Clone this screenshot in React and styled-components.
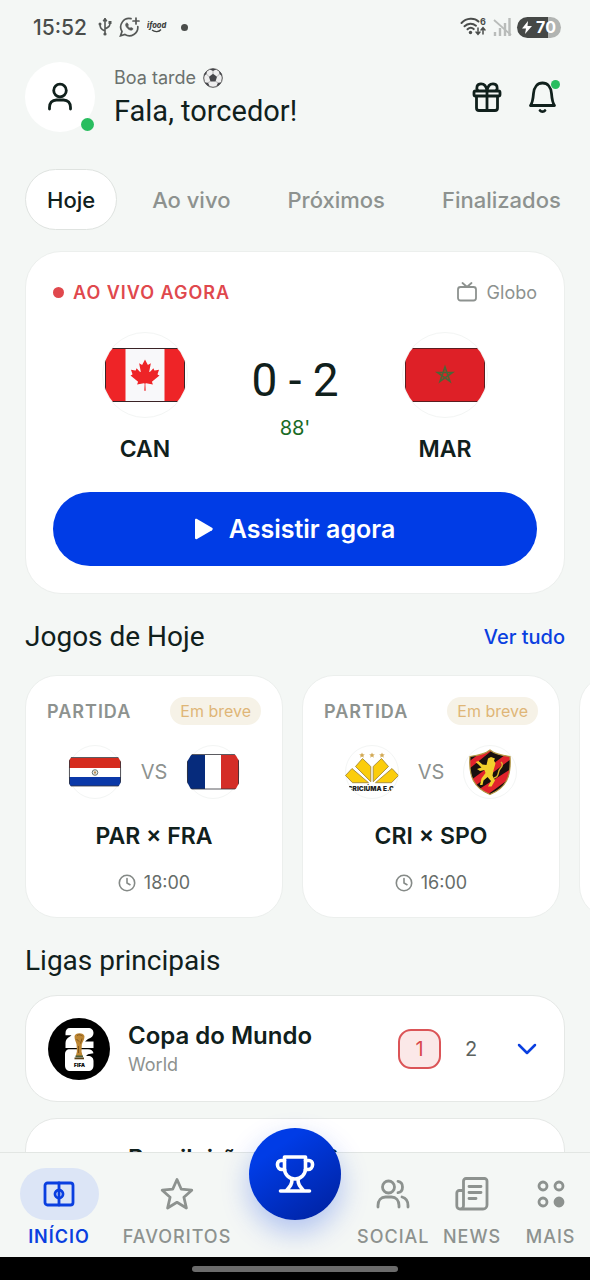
import React, { useState } from 'react';
import styled, { createGlobalStyle } from 'styled-components';

const matches = [
  { id: 1, home: 'PAR', away: 'FRA', time: '18:00', homeIcon: <ParaguayFlag />, awayIcon: <FranceFlag /> },
  { id: 2, home: 'CRI', away: 'SPO', time: '16:00', homeIcon: <CriciumaCrest />, awayIcon: <SportCrest /> },
];

const leagues = [
  { id: 1, name: 'Copa do Mundo', country: 'World', live: 1, total: 2, logo: <WorldCupLogo /> },
  { id: 2, name: 'Brasileirão Série B', country: 'Brazil', live: 0, total: 1, logo: null },
];

const tabs = ['Hoje', 'Ao vivo', 'Próximos', 'Finalizados'];

function App() {
  const [tab, setTab] = useState('Hoje');
  const [page, setPage] = useState('INÍCIO');

  return (
    <>
      <GlobalStyle />
      <Screen>
        <StatusBar />
        <Content>
          <Header />
          <Tabs role="tablist">
            {tabs.map((name) => (
              <Tab key={name} role="tab" aria-selected={tab === name} $active={tab === name} onClick={() => setTab(name)}>
                {name}
              </Tab>
            ))}
          </Tabs>
          <LiveMatch />
          <SectionHead $bottom={20}>
            <SectionTitle>Jogos de Hoje</SectionTitle>
            <SeeAll href="#jogos">Ver tudo</SeeAll>
          </SectionHead>
          <Carousel>
            {matches.map((match) => (
              <MatchCard key={match.id} match={match} />
            ))}
            {/* next match, still loading */}
            <Card />
          </Carousel>
          <SectionHead $bottom={16}>
            <SectionTitle>Ligas principais</SectionTitle>
          </SectionHead>
          <LeagueList>
            {leagues.map((league) => (
              <LeagueRow key={league.id} league={league} />
            ))}
          </LeagueList>
        </Content>
        <NavBar page={page} setPage={setPage} />
        <GestureBar><GestureHandle /></GestureBar>
      </Screen>
    </>
  );
}

function StatusBar() {
  return (
    <Status>
      <StatusGroup $gap={7}>
        <Clock>15:52</Clock>
        <svg width="14" height="20" viewBox="0 0 14 20" fill="none" stroke="#555856" strokeWidth="1.6">
          <path d="M7 2v14M7 14C3 12 2 11 2 7M7 12c4-2 5-3 5-6" />
          <path d="M5 4l2-3 2 3z" fill="#555856" strokeWidth="1" />
          <circle cx="7" cy="17" r="1.6" fill="#555856" stroke="none" />
          <circle cx="2" cy="7" r="1.5" fill="#555856" stroke="none" />
          <path d="M10.500 4h3v3h-3z" fill="#555856" stroke="none" />
        </svg>
        <svg width="21" height="20" viewBox="0 0 21 20" fill="none" stroke="#555856" strokeWidth="1.7" strokeLinecap="round">
          <path d="M12 1.700A8.500 8.500 0 0 0 3 14.500L1.500 18.800l4.400-1.300A8.500 8.500 0 0 0 18.800 9.500" />
          <path d="M17 1v6M14 4h6" />
          <path d="M7 6.500c-.8 1-.6 2.600 1.500 4.800s4.200 2.400 5.200 1.300l.3-1-2-1.200-1 .9c-1-.5-1.800-1.300-2.300-2.300l.8-1-1.200-1.900z" fill="#555856" strokeWidth="0.6" />
        </svg>
        <svg width="21" height="14" viewBox="0 0 21 14">
          <text x="0" y="8" fontFamily="Inter, sans-serif" fontSize="7.500" fontStyle="italic" fontWeight="800" fill="#3f4240">ifood</text>
          <path d="M5 10c3 2.500 7 2 9-.5" fill="none" stroke="#3f4240" strokeWidth="1.300" />
        </svg>
        <StatusDot />
      </StatusGroup>
      <StatusGroup $gap={5}>
        <svg width="27" height="20" viewBox="0 0 27 20" fill="none" stroke="#4a4d4b" strokeWidth="2" strokeLinecap="round">
          <path d="M1.500 6C6.500.7 14.500.7 18.500 4.500M4.500 9.300c3.300-3.300 8-3.500 11.500-.6M7.500 12.300c2-1.800 4.500-1.800 6.200-.2" />
          <circle cx="10.500" cy="15.500" r="1.700" fill="#4a4d4b" stroke="none" />
          <path d="M18 11v6M16 15l2 2.300 2-2.300M23 17v-6M21 13l2-2.300 2 2.300" strokeWidth="1.500" />
          <text x="20" y="8" fontFamily="Inter, sans-serif" fontSize="9" fontWeight="700" fill="#4a4d4b" stroke="none">6</text>
        </svg>
        <svg width="20" height="20" viewBox="0 0 20 20" stroke="#b9bcba" strokeWidth="2.400">
          <path d="M3 19v-4M8 19v-8M13 19V6M17.500 19V1" />
          <path d="M2 3l17 15" strokeWidth="1.800" />
        </svg>
        <Battery>
          <svg width="10" height="13" viewBox="0 0 10 13" fill="#fff"><path d="M6 0L0 7.500h4L3 13l7-8H5.500z" /></svg>
          70
        </Battery>
      </StatusGroup>
    </Status>
  );
}

function Header() {
  return (
    <TopBar>
      <Avatar aria-label="Perfil">
        <svg width="28" height="30" viewBox="0 0 28 30" fill="none" stroke="#10201c" strokeWidth="2.800" strokeLinecap="round">
          <circle cx="14" cy="8.500" r="6.300" />
          <path d="M3.500 27v-1.500c0-4.500 2.500-7.500 7-7.500h7c4.500 0 7 3 7 7.500V27" />
        </svg>
        <OnlineDot />
      </Avatar>
      <Greeting>
        <Hello>
          Boa tarde
          <BallIcon />
        </Hello>
        <UserName>Fala, torcedor!</UserName>
      </Greeting>
      <Actions>
        <IconButton aria-label="Presentes">
          <svg width="30" height="32" viewBox="0 0 30 32" fill="none" stroke="#10201c" strokeWidth="2.800" strokeLinejoin="round">
            <rect x="2" y="10" width="26" height="5" rx="1.500" />
            <path d="M4.500 15v12a2.500 2.500 0 0 0 2.500 2.500h16a2.500 2.500 0 0 0 2.500-2.500V15M15 10v19.500" />
            <path d="M15 10C14.500 6 12.500 2.800 9 2.800c-4 0-5.500 4-3 7.200M15 10c.5-4 2.500-7.200 6-7.200 4 0 5.500 4 3 7.200" />
          </svg>
        </IconButton>
        <IconButton aria-label="Notificações">
          <svg width="30" height="34" viewBox="0 0 30 34" fill="none" stroke="#10201c" strokeWidth="2.800" strokeLinecap="round" strokeLinejoin="round">
            <path d="M2.500 25.500h24c-1.800-2.500-2.500-5.500-3-12C23 7 19.500 3 14.500 3S6 7 5.500 13.500c-.5 6.500-1.200 9.500-3 12z" />
            <path d="M12 30.500c1.200 1.600 3.800 1.600 5 0" />
          </svg>
          <NewsDot />
        </IconButton>
      </Actions>
    </TopBar>
  );
}

function LiveMatch() {
  return (
    <LiveCard>
      <LiveHead>
        <LiveLabel><LiveDot />AO VIVO AGORA</LiveLabel>
        <Channel>
          <svg width="20" height="20" viewBox="0 0 20 20" fill="none" stroke="#8d928f" strokeWidth="1.800" strokeLinecap="round" strokeLinejoin="round">
            <rect x="1" y="5" width="18" height="13.500" rx="2.500" />
            <path d="M5.500 1L10 5l4.500-4" />
          </svg>
          Globo
        </Channel>
      </LiveHead>
      <Scoreboard>
        <Team>
          <Badge $size={86}><CanadaFlag /></Badge>
          <TeamName>CAN</TeamName>
        </Team>
        <ScoreBox>
          <Score>0 - 2</Score>
          <Minute>88'</Minute>
        </ScoreBox>
        <Team>
          <Badge $size={86}><MoroccoFlag /></Badge>
          <TeamName>MAR</TeamName>
        </Team>
      </Scoreboard>
      <WatchButton>
        <svg width="18" height="22" viewBox="0 0 18 22" fill="#fff"><path d="M0 2.200C0 .8 1 .5 2 1l15 8.800c1 .6 1 1.800 0 2.400L2 21c-1 .5-2 .2-2-1.200z" /></svg>
        Assistir agora
      </WatchButton>
    </LiveCard>
  );
}

function MatchCard({ match }) {
  return (
    <Card>
      <CardHead>
        <CardLabel>PARTIDA</CardLabel>
        <Soon>Em breve</Soon>
      </CardHead>
      <Versus>
        <Badge $size={54}>{match.homeIcon}</Badge>
        VS
        <Badge $size={54}>{match.awayIcon}</Badge>
      </Versus>
      <CardTitle>{match.home} × {match.away}</CardTitle>
      <CardTime>
        <svg width="18" height="18" viewBox="0 0 18 18" fill="none" stroke="#858a87" strokeWidth="1.600" strokeLinecap="round">
          <circle cx="9" cy="9" r="7.700" />
          <path d="M9 4.500V9l3 1.700" />
        </svg>
        {match.time}
      </CardTime>
    </Card>
  );
}

function LeagueRow({ league }) {
  return (
    <League>
      <LeagueLogo>{league.logo}</LeagueLogo>
      <LeagueText>
        <LeagueName>{league.name}</LeagueName>
        <LeagueCountry>{league.country}</LeagueCountry>
      </LeagueText>
      {league.live > 0 && <LiveCount>{league.live}</LiveCount>}
      <TotalCount>{league.total}</TotalCount>
      <Expand aria-label={`Abrir ${league.name}`}>
        <svg width="20" height="12" viewBox="0 0 20 12" fill="none" stroke="#0a3fe0" strokeWidth="2.500" strokeLinecap="round" strokeLinejoin="round">
          <path d="M2 2l8 8 8-8" />
        </svg>
      </Expand>
    </League>
  );
}

function NavBar({ page, setPage }) {
  const item = (name, icon) => (
    <NavItem $active={page === name} onClick={() => setPage(name)}>
      <NavIcon $active={page === name}>{icon}</NavIcon>
      {name}
    </NavItem>
  );

  return (
    <Nav>
      {item('INÍCIO', (
        <Stroke width="32" height="26" viewBox="0 0 32 26">
          <rect x="2" y="2" width="28" height="22" rx="2.500" />
          <path d="M16 2v22" />
          <circle cx="16" cy="13" r="4" />
        </Stroke>
      ))}
      {item('FAVORITOS', (
        <Stroke width="34" height="34" viewBox="0 0 34 34">
          <path d="M17 2.500l4.300 9.700 10.500 1-7.900 7.100 2.500 10.700L17 25.300 7.600 31l2.500-10.700-7.900-7.100 10.500-1z" />
        </Stroke>
      ))}
      <TrophyButton aria-label="Campeonatos">
        <svg width="42" height="42" viewBox="0 0 42 42" fill="none" stroke="#fff" strokeWidth="3.600" strokeLinecap="round" strokeLinejoin="round">
          <path d="M10.500 4h21v11.500c0 6-4.500 10.500-10.500 10.500s-10.500-4.500-10.500-10.500z" />
          <path d="M10.500 7.500H7a3.500 3.500 0 0 0-3.500 3.500v1A4.500 4.500 0 0 0 8 16.500h2.500M31.500 7.500H35a3.500 3.500 0 0 1 3.500 3.500v1a4.500 4.500 0 0 1-4.500 4.500h-2.500" />
          <path d="M18 26.500c0 5-2 7-5.500 11M24 26.500c0 5 2 7 5.500 11M6.500 38h29" />
        </svg>
      </TrophyButton>
      {item('SOCIAL', (
        <Stroke width="34" height="30" viewBox="0 0 34 30">
          <circle cx="12.500" cy="8" r="6" />
          <path d="M2 28v-1.500C2 21.500 5 18 9.500 18h6c4.500 0 7.500 3.500 7.500 8.500V28" />
          <path d="M22 2.300c6 .8 6 10.600 0 11.400M26 18c3.800 1 6 4.200 6 8.500V28" />
        </Stroke>
      ))}
      {item('NEWS', (
        <Stroke width="34" height="34" viewBox="0 0 34 34">
          <path d="M5 32h23a4 4 0 0 0 4-4V4a2.500 2.500 0 0 0-2.500-2.500H11A2.500 2.500 0 0 0 8.500 4v24.500A3.200 3.200 0 0 1 5 32a3.200 3.200 0 0 1-3.200-3.500V16a2.500 2.500 0 0 1 2.500-2.500h4" />
          <path d="M14 9.500h12M14 15.500h12M14 21.500h7" />
        </Stroke>
      ))}
      {item('MAIS', (
        <Stroke width="28" height="28" viewBox="0 0 28 28">
          <circle cx="6" cy="6" r="4" />
          <circle cx="22" cy="6" r="4" />
          <circle cx="6" cy="22" r="4" />
          <circle cx="22" cy="22" r="4" fill="currentColor" />
        </Stroke>
      ))}
    </Nav>
  );
}

function BallIcon() {
  return (
    <svg width="20" height="20" viewBox="0 0 20 20">
      <circle cx="10" cy="10" r="9.300" fill="#eeeeee" stroke="#555" strokeWidth="1" />
      <g fill="#45464a">
        <path d="M10 5.800l4 2.900-1.500 4.700h-5L6 8.700z" />
        <path d="M6.500 1.300L10 3l3.500-1.700C11.500.5 8.500.5 6.500 1.300zM1 8l2.500-2 .4-3C2 4.500 1 6 1 8zM19 8l-2.500-2-.4-3C18 4.500 19 6 19 8zM2 14.500l3 .2 1.800 3.800C4.500 17.800 3 16.500 2 14.500zM18 14.500l-3 .2-1.800 3.800c2.300-.7 3.800-2 4.800-4z" />
      </g>
      <path d="M10 3v3M3.500 6L6 8.700M16.500 6L14 8.700M5 14.700l2.500-1.300M15 14.700l-2.500-1.300" stroke="#999" strokeWidth=".7" />
    </svg>
  );
}

function CanadaFlag() {
  return (
    <Crest $radius={42} width="84" height="84" viewBox="0 0 84 84">
      <rect x="2" y="15" width="80" height="54" fill="#ee2427" />
      <rect x="22.500" y="15" width="39" height="54" fill="#f8f8fa" />
      <path
        transform="translate(42 42) scale(.0078)"
        fill="#ee2427"
        d="m-90 2030 45-863a95 95 0 0 0-111-98l-859 151 116-320a65 65 0 0 0-20-73l-941-762 212-99a65 65 0 0 0 34-79l-186-572 542 115a65 65 0 0 0 73-38l105-247 423 454a65 65 0 0 0 111-57l-204-1052 327 189a65 65 0 0 0 91-27l332-652 332 652a65 65 0 0 0 91 27l327-189-204 1052a65 65 0 0 0 111 57l423-454 105 247a65 65 0 0 0 73 38l542-115-186 572a65 65 0 0 0 34 79l212 99-941 762a65 65 0 0 0-20 73l116 320-859-151a95 95 0 0 0-111 98l45 863z"
      />
      <rect x="2.500" y="15.500" width="79" height="53" fill="none" stroke="#3a2326" />
    </Crest>
  );
}

function MoroccoFlag() {
  return (
    <Crest $radius={42} width="84" height="84" viewBox="0 0 84 84">
      <rect x="2.500" y="15.500" width="79" height="53" fill="#de2027" stroke="#5c1d20" />
      <path d="M42 34l5 14.500L34.500 39.500h15L37 48.500z" fill="none" stroke="#4b6636" strokeWidth="1.600" />
    </Crest>
  );
}

function ParaguayFlag() {
  return (
    <Crest $radius={28} width="52" height="52" viewBox="0 0 52 52">
      <rect y="12" width="52" height="10" fill="#d52b1e" />
      <rect y="22" width="52" height="9" fill="#fff" />
      <rect y="31" width="52" height="9" fill="#0a38a8" />
      <circle cx="26" cy="26.500" r="2.800" fill="#e6e8e2" stroke="#6f7a70" />
      <path d="M25 25.500h2v2h-2z" fill="#b98d52" />
      <rect x=".5" y="11.500" width="51" height="28.500" fill="none" stroke="#33333b" strokeWidth=".8" />
    </Crest>
  );
}

function FranceFlag() {
  return (
    <Crest $radius={28} width="52" height="52" viewBox="0 0 52 52">
      <rect y="9" width="52" height="34" fill="#fff" />
      <rect y="9" width="18" height="34" fill="#062b7c" />
      <rect x="34" y="9" width="18" height="34" fill="#d42d27" />
      <rect x=".5" y="8.500" width="51" height="34.500" fill="none" stroke="#33333b" strokeWidth=".8" />
    </Crest>
  );
}

function CriciumaCrest() {
  return (
    <Crest $radius={27} width="54" height="54" viewBox="0 0 54 54">
      <g fill="#fbcd0c" stroke="#a5893a" strokeWidth=".9">
        <path d="M.5 30.500l6.500-7 16.500 14.200H7.500zM53.500 30.500l-6.500-7-16.500 14.200h16z" />
        <path d="M17.500 13.500l8.300 8v15.200L10.500 21.500zM36.500 13.500l-8.300 8v15.200l15.300-15.200z" />
      </g>
      <g fill="#d2a954">
        <path id="star" d="M17 7.500l.8 1.800 2 .1-1.500 1.300.5 2-1.800-1.100-1.800 1.100.5-2-1.500-1.300 2-.1z" />
        <use href="#star" x="10" />
        <use href="#star" x="20" />
      </g>
      <text x="27" y="46" textAnchor="middle" fontFamily="Inter, sans-serif" fontSize="6.500" fontWeight="900" fill="#222">CRICIÚMA E.C.</text>
    </Crest>
  );
}

function SportCrest() {
  return (
    <Crest $radius={27} width="54" height="54" viewBox="0 0 54 54">
      <clipPath id="shield">
        <path d="M27 5c4 3.500 12 5.500 20 6.500C48.500 32 43 43 27 49.500 11 43 5.500 32 7 11.500 15 10.500 23 8.500 27 5z" />
      </clipPath>
      <g clipPath="url(#shield)">
        <path d="M0 0h54v54H0z" fill="#19100e" />
        <path d="M-4 24L24 3h8L-4 32zM0 41L46 7l6 4L4 47zM10 48L54 20v8L20 53z" fill="#e1232c" />
      </g>
      <path d="M27 5c4 3.500 12 5.500 20 6.500C48.500 32 43 43 27 49.500 11 43 5.500 32 7 11.500 15 10.500 23 8.500 27 5z" fill="none" stroke="#b69a45" strokeWidth="1.200" />
      <path d="M25 13.500l3-1.500 4 1.500-1 2 1.500 3-2 7-1 5 2.500 5-3.500 6h-3.500l3-5.500-3.500-4-4 3.500-1 4.500h-2.500l1.500-6.500 4-5.500-1-3-4.500 1-3-2 4.500-1.500-3-3-3-2.500 3-1 4 3.500 4 .5z" fill="#f2cf2c" />
      <path d="M31 33c6-1 3-6 6-9s3-5 1-7" fill="none" stroke="#d9b52c" strokeWidth="1.400" />
    </Crest>
  );
}

function WorldCupLogo() {
  return (
    <svg width="62" height="62" viewBox="0 0 62 62">
      <circle cx="31" cy="31" r="31" fill="#000" />
      <path d="M22 10h18c3.500 0 5.500 2 5.500 5 0 3-2 5-5.500 6l-3 2.500h8.500V30h-28v-5c0-3 1.500-5 4.500-6.500l1.500-1.200h-6V15c0-3 1.500-5 4.500-5z" fill="#fff" />
      <path d="M22 31.200h18c3 0 5 1.300 5.500 4l-5.500 1-2 1.800h2c3.500 0 5.500 2 5.500 5V47c0 4-2 6-5.500 6H22.500c-3.500 0-5.500-2-5.500-6V36.500c0-3.300 1.500-5.300 5-5.300z" fill="#fff" />
      <path d="M26.500 18.500c0-4.500 10-4.500 10 0 0 3.500-2 5-2.700 8l-.3 7 1.200 5h-7l1.200-5-.3-7c-.6-3-2.100-4.500-2.100-8z" fill="#bd8633" />
      <path d="M29 17.500c2-1.500 4-.5 5.500.5M28.500 21l2.500 2.500M34 20.500l-1.500 5M30.500 28v7" stroke="#7a521f" strokeWidth=".9" fill="none" />
      <path d="M27.500 37.500h7.500v1.800h-7.500z" fill="#49603a" />
      <path d="M26.500 39.500h9.500v1.800h-9.500z" fill="#5b4318" />
      <text x="31.500" y="48.500" textAnchor="middle" fontFamily="Inter, sans-serif" fontSize="5" fontWeight="900" fill="#000">FIFA</text>
    </svg>
  );
}

const GlobalStyle = createGlobalStyle`
  * { box-sizing: border-box; }
  body {
    margin: 0;
    background: #f4f7f5;
    color: #10201c;
    font-family: Inter, 'Liberation Sans', sans-serif;
  }
  button {
    border: 0;
    padding: 0;
    background: none;
    color: inherit;
    font-family: inherit;
    cursor: pointer;
  }
  svg { display: block; flex-shrink: 0; }
`

const Screen = styled.div`
  display: flex;
  flex-direction: column;
  height: 100vh;
`

const Status = styled.div`
  display: flex;
  align-items: center;
  justify-content: space-between;
  height: 54px;
  flex-shrink: 0;
  padding: 0 29px 0 33px;
`

const StatusGroup = styled.div`
  display: flex;
  align-items: center;
  gap: ${(props) => props.$gap}px;
`

const Clock = styled.span`
  margin-right: 4px;
  font-size: 21px;
  font-weight: 500;
  color: #4a4d4b;
`

const StatusDot = styled.i`
  width: 7px;
  height: 7px;
  margin-left: 6px;
  border-radius: 50%;
  background: #4a4d4b;
`

const Battery = styled.span`
  display: flex;
  align-items: center;
  justify-content: center;
  gap: 4px;
  width: 44px;
  height: 21px;
  border-radius: 11px;
  background: linear-gradient(90deg, #454846 70%, #b1b4b2 70%);
  color: #fff;
  font-size: 16px;
  font-weight: 700;
`

const Content = styled.main`
  flex: 1;
  min-height: 0;
  overflow-y: auto;
  scrollbar-width: none;
`

const TopBar = styled.header`
  display: flex;
  align-items: center;
  padding: 8px 25px 0;
`

const Avatar = styled.button`
  position: relative;
  display: flex;
  align-items: center;
  justify-content: center;
  width: 70px;
  height: 70px;
  border-radius: 50%;
  background: #fff;
`

const OnlineDot = styled.i`
  position: absolute;
  right: 1px;
  bottom: 1px;
  width: 13px;
  height: 13px;
  border-radius: 50%;
  background: #29bd5f;
`

const Greeting = styled.div`
  flex: 1;
  margin-left: 19px;
  padding-top: 2px;
`

const Hello = styled.div`
  display: flex;
  align-items: center;
  gap: 7px;
  font-size: 18px;
  line-height: 26px;
  color: #6b716e;
`

const UserName = styled.div`
  font-family: Roboto, sans-serif;
  font-size: 29px;
  line-height: 40px;
`

const Actions = styled.div`
  display: flex;
  gap: 12px;
`

const IconButton = styled.button`
  position: relative;
  display: flex;
  align-items: center;
  justify-content: center;
  width: 44px;
  height: 44px;
`

const NewsDot = styled.i`
  position: absolute;
  top: 5px;
  right: 5px;
  width: 9px;
  height: 9px;
  border-radius: 50%;
  background: #29bd5f;
`

const Tabs = styled.div`
  display: flex;
  gap: 13px;
  padding: 37px 0 21px 25px;
  overflow-x: auto;
  scrollbar-width: none;
`

const Tab = styled.button`
  flex-shrink: 0;
  height: 61px;
  padding: 1px 21px 0;
  border: 1px solid ${(props) => (props.$active ? '#dfe3e0' : 'transparent')};
  border-radius: 31px;
  background: ${(props) => (props.$active ? '#fff' : 'transparent')};
  color: ${(props) => (props.$active ? '#10201c' : '#8d928f')};
  font-size: 22px;
  font-weight: 500;
`

const LiveCard = styled.section`
  margin: 0 25px;
  padding: 27px;
  border: 1px solid #ecefed;
  border-radius: 36px;
  background: #fff;
`

const LiveHead = styled.div`
  display: flex;
  align-items: center;
  justify-content: space-between;
  height: 26px;
`

const LiveLabel = styled.span`
  display: flex;
  align-items: center;
  gap: 9px;
  color: #e0484d;
  font-size: 18px;
  font-weight: 600;
  letter-spacing: 1px;
`

const LiveDot = styled.i`
  width: 11px;
  height: 11px;
  border-radius: 50%;
  background: #e0484d;
`

const Channel = styled.span`
  display: flex;
  align-items: center;
  gap: 10px;
  color: #8d928f;
  font-size: 18px;
`

const Scoreboard = styled.div`
  display: grid;
  grid-template-columns: 1fr 116px 1fr;
  padding: 27px 0 28px;
`

const Team = styled.div`
  display: flex;
  flex-direction: column;
  align-items: center;
  gap: 16px;
`

const Badge = styled.span`
  display: flex;
  align-items: center;
  justify-content: center;
  width: ${(props) => props.$size}px;
  height: ${(props) => props.$size}px;
  border: 1px solid #f3f5f4;
  border-radius: 50%;
  background: #fff;
`

const Crest = styled.svg`
  clip-path: circle(${(props) => props.$radius}px);
`

const TeamName = styled.strong`
  font-size: 23px;
  line-height: 30px;
  font-weight: 600;
`

const ScoreBox = styled.div`
  display: flex;
  flex-direction: column;
  align-items: center;
  padding-top: 20px;
`

const Score = styled.div`
  font-family: Roboto, sans-serif;
  font-size: 46px;
  line-height: 56px;
  white-space: nowrap;
`

const Minute = styled.div`
  color: #1a6b25;
  font-size: 20px;
  line-height: 40px;
`

const WatchButton = styled.button`
  display: flex;
  align-items: center;
  justify-content: center;
  gap: 16px;
  width: 100%;
  height: 74px;
  border-radius: 37px;
  background: #003ce6;
  color: #fff;
  font-size: 25px;
  font-weight: 600;
`

const SectionHead = styled.div`
  display: flex;
  align-items: center;
  justify-content: space-between;
  padding: 25px 25px ${(props) => props.$bottom}px;
`

const SectionTitle = styled.h2`
  margin: 0;
  font-family: Roboto, sans-serif;
  font-size: 28px;
  line-height: 36px;
  font-weight: 400;
`

const SeeAll = styled.a`
  color: #0a3fe0;
  font-size: 20px;
  font-weight: 500;
  line-height: 36px;
  text-decoration: none;
`

const Carousel = styled.div`
  display: flex;
  gap: 19px;
  padding: 0 25px;
  overflow-x: auto;
  scrollbar-width: none;
`

const Card = styled.article`
  flex: 0 0 258px;
  padding: 21px;
  border: 1px solid #ecefed;
  border-radius: 32px;
  background: #fff;
`

const CardHead = styled.div`
  display: flex;
  align-items: center;
  justify-content: space-between;
`

const CardLabel = styled.span`
  color: #8d928f;
  font-size: 18px;
  font-weight: 600;
  letter-spacing: 1px;
`

const Soon = styled.span`
  padding: 0 10px;
  border-radius: 14px;
  background: #f6f2e7;
  color: #dfb677;
  font-size: 16px;
  line-height: 28px;
`

const Versus = styled.div`
  display: flex;
  align-items: center;
  justify-content: center;
  gap: 19px;
  padding: 20px 0;
  color: #8d928f;
  font-size: 20px;
`

const CardTitle = styled.div`
  text-align: center;
  font-size: 23px;
  line-height: 34px;
  font-weight: 600;
`

const CardTime = styled.div`
  display: flex;
  align-items: center;
  justify-content: center;
  gap: 8px;
  padding: 17px 0 0;
  color: #666c69;
  font-size: 18px;
  line-height: 26px;
`

const LeagueList = styled.div`
  display: flex;
  flex-direction: column;
  gap: 16px;
  padding: 0 25px 60px;
`

const League = styled.article`
  display: flex;
  align-items: center;
  height: 107px;
  padding: 0 27px 0 22px;
  border: 1px solid #e5e8e6;
  border-radius: 32px;
  background: #fff;
`

const LeagueLogo = styled.span`
  width: 62px;
  height: 62px;
  margin-right: 18px;
`

const LeagueText = styled.div`
  flex: 1;
`

const LeagueName = styled.div`
  font-size: 24px;
  line-height: 32px;
  font-weight: 600;
`

const LeagueCountry = styled.div`
  color: #8d928f;
  font-size: 18px;
  line-height: 26px;
`

const LiveCount = styled.span`
  width: 43px;
  border: 2px solid #db5457;
  border-radius: 13px;
  background: #fbe8e8;
  color: #d9484c;
  font-size: 20px;
  line-height: 36px;
  text-align: center;
`

const TotalCount = styled.span`
  width: 60px;
  color: #5c625f;
  font-size: 20px;
  text-align: center;
`

const Expand = styled.button`
  margin-left: 16px;
`

const Nav = styled.nav`
  z-index: 1;
  display: grid;
  grid-template-columns: 3fr 3fr 3fr 2fr 2fr 2fr;
  flex-shrink: 0;
  height: 105px;
  padding-top: 15px;
  border-top: 1px solid #e2e6e3;
  background: #f4f7f5;
`

const NavItem = styled.button`
  display: flex;
  flex-direction: column;
  align-items: center;
  gap: 6px;
  min-width: 0;
  color: ${(props) => (props.$active ? '#0a3fe0' : '#8d928f')};
  font-size: 18px;
  line-height: 22px;
  font-weight: ${(props) => (props.$active ? 600 : 500)};
  letter-spacing: 1px;
`

const NavIcon = styled.span`
  display: flex;
  align-items: center;
  justify-content: center;
  width: 79px;
  height: 52px;
  border-radius: 26px;
  background: ${(props) => (props.$active ? '#dce5f6' : 'transparent')};
`

const Stroke = styled.svg`
  fill: none;
  stroke: currentColor;
  stroke-width: 2.8px;
  stroke-linecap: round;
  stroke-linejoin: round;

  [fill='currentColor'] { fill: currentColor; }
`

const TrophyButton = styled.button`
  display: flex;
  align-items: center;
  justify-content: center;
  align-self: start;
  justify-self: center;
  width: 92px;
  height: 92px;
  margin-top: -40px;
  border-radius: 50%;
  background: linear-gradient(145deg, #003ce6 25%, #00209c);
  box-shadow: 0 12px 28px rgba(0, 60, 230, 0.28);
`

const GestureBar = styled.div`
  display: flex;
  justify-content: center;
  flex-shrink: 0;
  z-index: 1;
  height: 23px;
  padding-top: 9px;
  background: #000;
`

const GestureHandle = styled.i`
  width: 35%;
  height: 6px;
  border-radius: 3px;
  background: #6b6b6b;
`

export default App;
